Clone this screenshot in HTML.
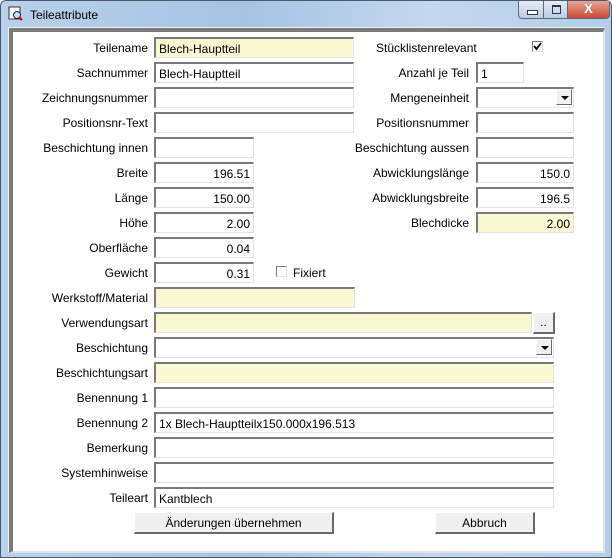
<!DOCTYPE html>
<html><head><meta charset="utf-8"><style>
body{margin:0;width:612px;height:558px;overflow:hidden;font-family:"Liberation Sans",Arial,sans-serif;font-size:12px;color:#000;position:relative;}
#win{position:absolute;left:0;top:0;width:610px;height:556px;border:1px solid #4a5a70;border-radius:6px 6px 0 0;background:linear-gradient(90deg,#b9d1ea 0%,#a6c3e3 40%,#c3d8ee 70%,#b3cde8 100%);}
#title{position:absolute;left:29px;top:7px;font-size:12px;color:#000;}
#client{position:absolute;left:8px;top:27px;width:596px;height:525px;background:#f0f0f0;}
#inner{position:absolute;left:1px;top:1px;width:590px;height:519px;border-top:4px solid #7a7a7a;border-left:4px solid #7a7a7a;border-right:2px solid #e3e3e3;border-bottom:2px solid #e3e3e3;background:#fff;}
#c{position:absolute;left:0;top:0;width:612px;height:558px;}
.l{position:absolute;text-align:right;white-space:nowrap;line-height:23px;}
.f{position:absolute;box-sizing:border-box;height:21px;border-top:2px solid #7a7a7a;border-left:2px solid #7a7a7a;border-right:1px solid #e3e3e3;border-bottom:1px solid #e3e3e3;background:#fff;padding:1px 3px 0;line-height:18px;white-space:nowrap;}
.y{background:#f8f8d2;}
.r{text-align:right;}
.btn{position:absolute;box-sizing:border-box;height:22px;background:#f0f0f0;border-top:1px solid #fff;border-left:1px solid #fff;border-right:2px solid #696969;border-bottom:2px solid #696969;text-align:center;line-height:20px;}
.dd{position:absolute;right:1px;top:0px;width:16px;height:16px;box-sizing:border-box;background:#f0f0f0;border-top:1px solid #fff;border-left:1px solid #fff;border-right:1px solid #696969;border-bottom:1px solid #696969;}
.dd:after{content:"";position:absolute;left:4px;top:6px;border-left:4px solid transparent;border-right:4px solid transparent;border-top:4px solid #000;}
.cb{position:absolute;width:11px;height:11px;box-sizing:border-box;border-top:1px solid #7a7a7a;border-left:1px solid #7a7a7a;border-right:1px solid #e3e3e3;border-bottom:1px solid #e3e3e3;background:#fff;}
.wb{position:absolute;top:0;height:18px;border:1px solid #5a6a80;border-top:none;box-sizing:border-box;}
</style></head><body>
<div id="win">
<svg style="position:absolute;left:7px;top:5px" width="16" height="16"><rect x="1" y="1" width="11" height="12" fill="#fff" stroke="#333"/><circle cx="9" cy="9" r="3.5" fill="#cde" stroke="#124"/><line x1="11" y1="11" x2="14" y2="14" stroke="#c00" stroke-width="2"/></svg>
<div id="title">Teileattribute</div>
<div class="wb" style="left:517px;width:26px;border-radius:0 0 0 4px;background:linear-gradient(#e3ecf6,#bccde3)"><div style="position:absolute;left:8px;top:9px;width:9px;height:3px;border:1px solid #334;background:#fff"></div></div>
<div class="wb" style="left:542px;width:25px;background:linear-gradient(#e3ecf6,#bccde3)"><div style="position:absolute;left:8px;top:4px;width:7px;height:6px;border:1px solid #334;border-top:2px solid #334"></div></div>
<div class="wb" style="left:566px;width:43px;border-radius:0 0 4px 0;background:linear-gradient(#e8a597,#c74a35);color:#fff;font-weight:bold;text-align:center;line-height:16px;font-size:13px">X</div>
</div>
<div id="client"><div id="inner"></div></div>
<div id="c">
<div class="l" style="right:464px;top:37px">Teilename</div><div class="f y" style="left:154px;top:37px;width:200px">Blech-Hauptteil</div>
<div class="l" style="right:464px;top:62px">Sachnummer</div><div class="f" style="left:154px;top:62px;width:200px">Blech-Hauptteil</div>
<div class="l" style="right:464px;top:87px">Zeichnungsnummer</div><div class="f" style="left:154px;top:87px;width:200px"></div>
<div class="l" style="right:464px;top:112px">Positionsnr-Text</div><div class="f" style="left:154px;top:112px;width:200px"></div>
<div class="l" style="right:464px;top:137px">Beschichtung innen</div><div class="f" style="left:154px;top:137px;width:100px"></div>
<div class="l" style="right:464px;top:162px">Breite</div><div class="f r" style="left:154px;top:162px;width:100px">196.51</div>
<div class="l" style="right:464px;top:187px">Länge</div><div class="f r" style="left:154px;top:187px;width:100px">150.00</div>
<div class="l" style="right:464px;top:212px">Höhe</div><div class="f r" style="left:154px;top:212px;width:100px">2.00</div>
<div class="l" style="right:464px;top:237px">Oberfläche</div><div class="f r" style="left:154px;top:237px;width:100px">0.04</div>
<div class="l" style="right:464px;top:262px">Gewicht</div><div class="f r" style="left:154px;top:262px;width:100px">0.31</div>
<div class="cb" style="left:276px;top:266px"></div><div class="l" style="left:293px;top:262px;text-align:left">Fixiert</div>
<div class="l" style="right:464px;top:287px">Werkstoff/Material</div><div class="f y" style="left:154px;top:287px;width:201px"></div>
<div class="l" style="right:464px;top:312px">Verwendungsart</div><div class="f y" style="left:154px;top:312px;width:378px"></div>
<div class="btn" style="left:533px;top:312px;width:22px;height:22px;line-height:18px">..</div>
<div class="l" style="right:464px;top:337px">Beschichtung</div><div class="f" style="left:154px;top:337px;width:400px"><div class="dd"></div></div>
<div class="l" style="right:464px;top:362px">Beschichtungsart</div><div class="f y" style="left:154px;top:362px;width:400px"></div>
<div class="l" style="right:464px;top:387px">Benennung 1</div><div class="f" style="left:154px;top:387px;width:400px"></div>
<div class="l" style="right:464px;top:412px">Benennung 2</div><div class="f" style="left:154px;top:412px;width:400px">1x Blech-Hauptteilx150.000x196.513</div>
<div class="l" style="right:464px;top:437px">Bemerkung</div><div class="f" style="left:154px;top:437px;width:400px"></div>
<div class="l" style="right:464px;top:462px">Systemhinweise</div><div class="f" style="left:154px;top:462px;width:400px"></div>
<div class="l" style="right:464px;top:487px">Teileart</div><div class="f" style="left:154px;top:487px;width:400px">Kantblech</div>

<div class="l" style="left:376px;top:37px;text-align:left">Stücklistenrelevant</div>
<div class="cb" style="left:532px;top:41px"><svg width="9" height="9" style="position:absolute;left:0;top:0"><path d="M1 4 L3.5 7 L8 1" stroke="#000" stroke-width="1.8" fill="none"/></svg></div>
<div class="l" style="right:143px;top:62px">Anzahl je Teil</div><div class="f" style="left:476px;top:62px;width:48px">1</div>
<div class="l" style="right:143px;top:87px">Mengeneinheit</div><div class="f" style="left:476px;top:87px;width:98px"><div class="dd"></div></div>
<div class="l" style="right:143px;top:112px">Positionsnummer</div><div class="f" style="left:476px;top:112px;width:98px"></div>
<div class="l" style="right:143px;top:137px">Beschichtung aussen</div><div class="f" style="left:476px;top:137px;width:98px"></div>
<div class="l" style="right:143px;top:162px">Abwicklungslänge</div><div class="f r" style="left:476px;top:162px;width:98px">150.0</div>
<div class="l" style="right:143px;top:187px">Abwicklungsbreite</div><div class="f r" style="left:476px;top:187px;width:98px">196.5</div>
<div class="l" style="right:143px;top:212px">Blechdicke</div><div class="f r y" style="left:476px;top:212px;width:98px">2.00</div>

<div class="btn" style="left:134px;top:512px;width:200px">Änderungen übernehmen</div>
<div class="btn" style="left:435px;top:512px;width:100px">Abbruch</div>
</div>
</body></html>
